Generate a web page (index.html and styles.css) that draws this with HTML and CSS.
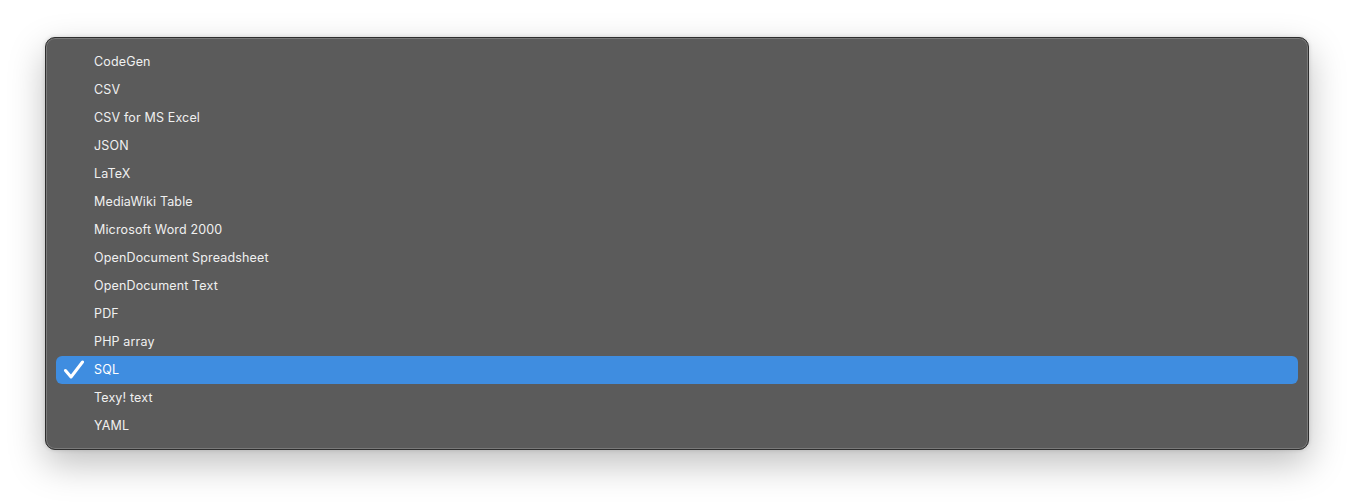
FILE: index.html
```html
<!DOCTYPE html>
<html>
<head>
<meta charset="utf-8">
<link rel="stylesheet" href="styles.css">
</head>
<body>
<div class="menu">
  <div class="item">CodeGen</div>
  <div class="item">CSV</div>
  <div class="item">CSV for MS Excel</div>
  <div class="item">JSON</div>
  <div class="item">LaTeX</div>
  <div class="item">MediaWiki Table</div>
  <div class="item">Microsoft Word 2000</div>
  <div class="item">OpenDocument Spreadsheet</div>
  <div class="item">OpenDocument Text</div>
  <div class="item">PDF</div>
  <div class="item">PHP array</div>
  <div class="item selected"><svg class="check" width="22" height="20" viewBox="0 0 22 20"><path d="M2.5 10.5 L8 17 L19.5 2" fill="none" stroke="#fff" stroke-width="3" stroke-linecap="round" stroke-linejoin="round"/></svg>SQL</div>
  <div class="item">Texy! text</div>
  <div class="item">YAML</div>
</div>
</body>
</html>
```
FILE: styles.css
```css
html, body {
  margin: 0;
  padding: 0;
  background: #ffffff;
}
body {
  padding: 37px 45px 54px 45px;
  min-height: 504px;
  box-sizing: border-box;
  font-family: "Inter", "Liberation Sans", sans-serif;
}
.menu {
  width: 1264px;
  height: 413px;
  box-sizing: border-box;
  background: #5b5b5b;
  border: 1px solid #2e2e2e;
  border-radius: 10px;
  box-shadow: inset 0 0 0 1px #7a7a7a, 0 14px 36px rgba(0, 0, 0, 0.25), 0 0 4px rgba(0,0,0,0.15);
  padding: 10px 10px 0 10px;
  display: flex;
  flex-direction: column;
}
.item {
  height: 28px;
  line-height: 28px;
  padding-left: 38px;
  color: #f0f0f0;
  font-size: 12.5px;
  font-weight: 400;
  letter-spacing: 0.15px;
  border-radius: 6px;
  position: relative;
}
.item.selected {
  background: #3f8de0;
  color: #ffffff;
}
.check {
  position: absolute;
  left: 7px;
  top: 4px;
}
```
